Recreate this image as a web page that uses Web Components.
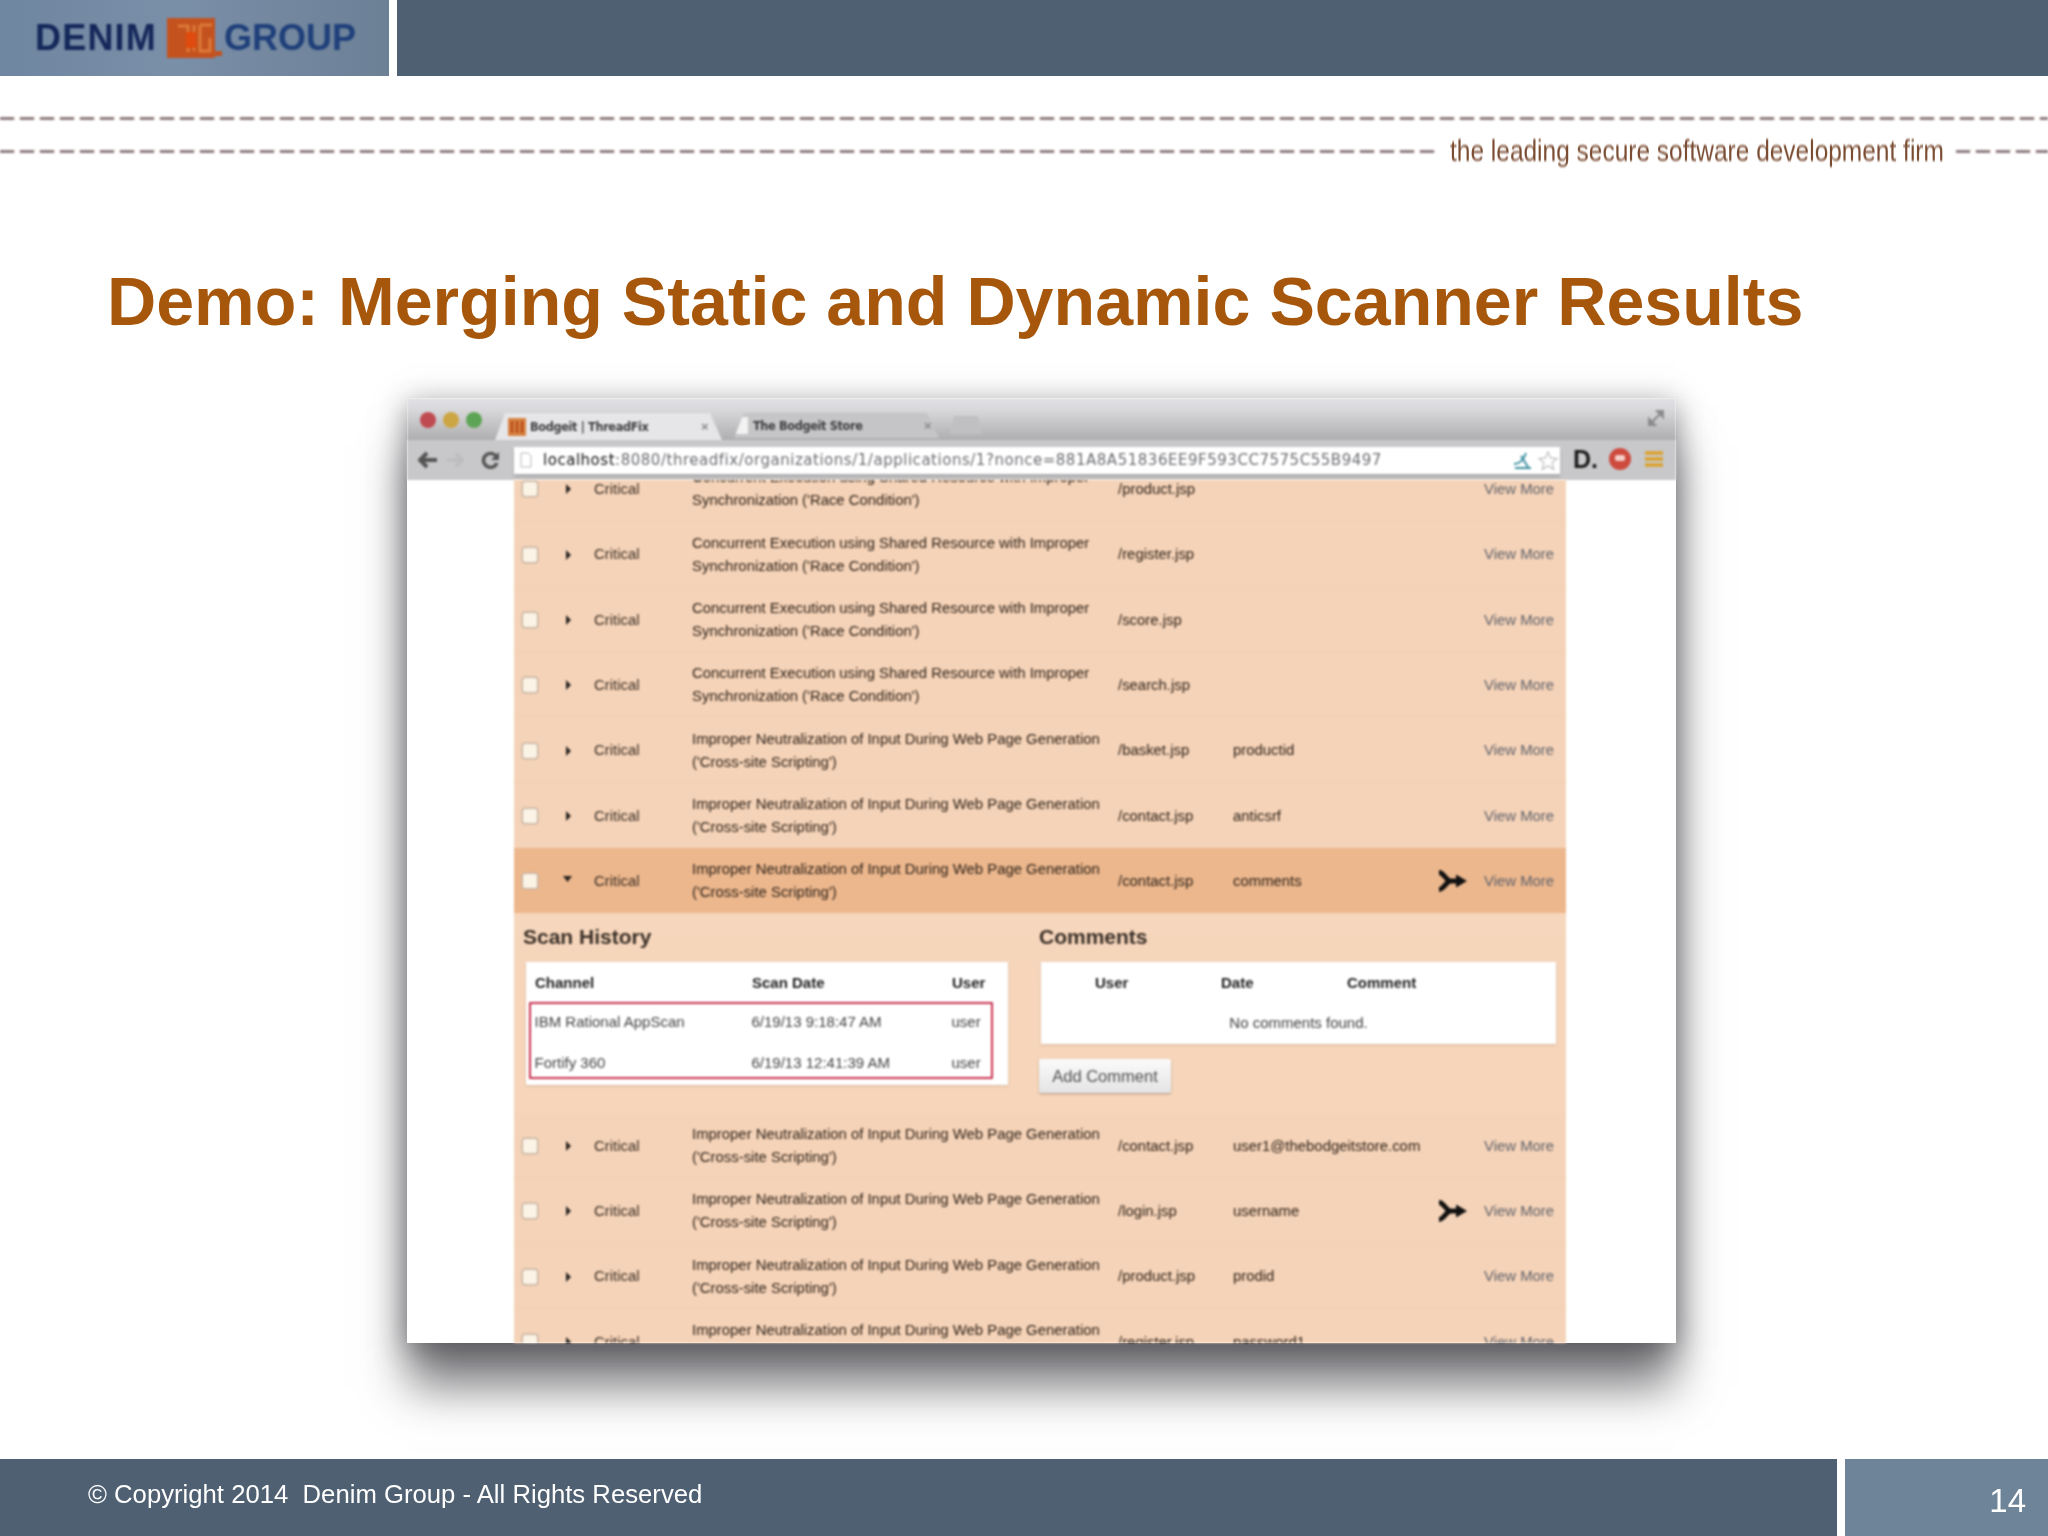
<!DOCTYPE html>
<html lang="en"><head><meta charset="utf-8"><title>Demo: Merging Static and Dynamic Scanner Results</title>
<style>
html,body{margin:0;padding:0;background:#fff}
body{font-family:"Liberation Sans",Arial,sans-serif}
</style></head><body>
<demo-slide>
  <slide-header></slide-header>
  <tagline-rule>the leading secure software development firm</tagline-rule>
  <slide-title>Demo: Merging Static and Dynamic Scanner Results</slide-title>
  <browser-window>
    <finding-row path="/product.jsp">Concurrent Execution using Shared Resource with Improper<br>Synchronization ('Race Condition')</finding-row>
    <finding-row path="/register.jsp">Concurrent Execution using Shared Resource with Improper<br>Synchronization ('Race Condition')</finding-row>
    <finding-row path="/score.jsp">Concurrent Execution using Shared Resource with Improper<br>Synchronization ('Race Condition')</finding-row>
    <finding-row path="/search.jsp">Concurrent Execution using Shared Resource with Improper<br>Synchronization ('Race Condition')</finding-row>
    <finding-row path="/basket.jsp" param="productid">Improper Neutralization of Input During Web Page Generation<br>('Cross-site Scripting')</finding-row>
    <finding-row path="/contact.jsp" param="anticsrf">Improper Neutralization of Input During Web Page Generation<br>('Cross-site Scripting')</finding-row>
    <finding-row path="/contact.jsp" param="comments" merged expanded>Improper Neutralization of Input During Web Page Generation<br>('Cross-site Scripting')</finding-row>
    <finding-detail></finding-detail>
    <finding-row path="/contact.jsp" param="user1@thebodgeitstore.com">Improper Neutralization of Input During Web Page Generation<br>('Cross-site Scripting')</finding-row>
    <finding-row path="/login.jsp" param="username" merged>Improper Neutralization of Input During Web Page Generation<br>('Cross-site Scripting')</finding-row>
    <finding-row path="/product.jsp" param="prodid">Improper Neutralization of Input During Web Page Generation<br>('Cross-site Scripting')</finding-row>
    <finding-row path="/register.jsp" param="password1">Improper Neutralization of Input During Web Page Generation<br>('Cross-site Scripting')</finding-row>
  </browser-window>
  <slide-footer></slide-footer>
</demo-slide>
<script>
const def=(name,html)=>customElements.define(name,class extends HTMLElement{
  constructor(){super();this.attachShadow({mode:'open'}).innerHTML=html}
});

def('demo-slide',`<style>
:host{display:flex;flex-direction:column;width:2048px;height:1536px;overflow:hidden;background:#fff}
</style><slot></slot>`);

def('slide-header',`<style>
:host{display:flex;height:76px;gap:8px;flex:none}
.logo{width:389px;background:linear-gradient(90deg,#6f86a0,#7a8fa8 45%,#6c8196);box-sizing:border-box;padding-left:35px;display:flex;align-items:center;
 font:bold 36px/1 "Liberation Sans",sans-serif}
.d{color:#14275a;letter-spacing:1.2px;filter:blur(.8px)}.g{color:#1f3f7a;filter:blur(.8px)}
svg{width:56px;height:40px;margin:0 2px 0 9px;flex:none;filter:blur(1.2px)}
.bar{flex:1;background:#4f6072}
</style>
<div class="logo"><span class="d">DENIM</span>
<svg viewBox="0 0 56 40"><rect x="1" y="0" width="48" height="40" fill="#c4521f"/><rect x="49" y="33" width="7" height="5" fill="#c4521f"/>
<path d="M12 8h10v26M28 7v26M34 7h12M34 7v26h10V20" fill="none" stroke="#dd7a3a" stroke-width="3"/><rect x="20" y="14" width="10" height="16" fill="#e04a0c"/></svg>
<span class="g">GROUP</span></div><div class="bar"></div>`);

def('tagline-rule',`<style>
:host{display:flex;flex-direction:column;flex:none;height:96px;box-sizing:border-box;padding-top:41px}
.dash{flex:none;height:3px;background:repeating-linear-gradient(90deg,#8d7b7f 0 14px,#f3e4da 14px 15px,#fff 15px 19px,#f3e4da 19px 20px);filter:blur(.8px)}
.row2{flex:none;display:flex;align-items:center;margin-top:16.500px;height:30px}
.a{width:1435px}.b{flex:1;min-width:0}
.t{flex:none;width:490px;margin:-2px 16px 0 15px;height:30px}
span{display:block;transform:scaleX(.844);transform-origin:0 50%;white-space:nowrap;font:29px/30px "Liberation Sans",sans-serif;color:#7a4c32;filter:blur(.8px)}
</style><div class="dash"></div>
<div class="row2"><div class="dash a"></div><div class="t"><span><slot></slot></span></div><div class="dash b"></div></div>`);

def('slide-title',`<style>
:host{display:block;flex:none;height:84px;margin-top:87px;padding-left:107px;font:bold 68.150px/84px "Liberation Sans",sans-serif;color:#a7570b;white-space:nowrap}
</style><slot></slot>`);

def('browser-window',`<style>
:host{display:flex;flex-direction:column;flex:none;box-sizing:border-box;width:1269px;height:945px;margin:55px 0 0 407px;background:#fff;
 box-shadow:0 46px 44px -2px rgba(40,40,45,.6),0 6px 28px rgba(40,40,45,.5)}
.chrome{flex:none;filter:blur(.8px)}
.tabs{height:42px;display:flex;align-items:flex-end;background:linear-gradient(#e2e2e6,#dadadd 25%,#aeaeb0);padding-left:88px;position:relative}
.lights{position:absolute;left:13px;top:14px;display:flex;gap:7px}
.lights i{width:16px;height:16px;border-radius:50%}
.expand{position:absolute;right:11px;top:11px;width:18px;height:18px}
.stub{width:32px;height:18px;margin:0 0 6px 11px;background:#c0c0c2;clip-path:polygon(4px 0,calc(100% - 4px) 0,100% 100%,0 100%)}
.bar{height:40px;background:#c8c8ca;display:flex;align-items:center;position:relative}
.nav{width:107px;display:flex;align-items:center;flex:none;padding-left:11px;gap:8px;box-sizing:border-box}
.url{width:1046px;height:27px;background:#fff;flex:none;display:flex;align-items:center;box-shadow:0 3px 3px rgba(120,120,120,.35);position:relative}
.url .t{font:15px/27px "DejaVu Sans",sans-serif;color:#6c6d71;white-space:nowrap;margin-left:11px;letter-spacing:.525px}
.url b{font-weight:400;color:#111}
.tools{display:flex;align-items:center;position:absolute;left:1166px;top:0;height:40px;gap:11px;margin-top:-1px}
.d{font:bold 25px/1 "Liberation Sans",sans-serif;color:#1c1c1c;width:24px}
.scroll{flex:1;overflow:hidden;min-height:0;filter:blur(.8px)}
.page{width:1052px;margin:-24px 0 0 107px;background:#f5d3b8;font:15px/23px "Liberation Sans",sans-serif;color:#2e2218}
</style>
<div class="chrome"><div class="tabs">
<div class="lights"><i style="background:#c04a52"></i><i style="background:#cda644"></i><i style="background:#5ea456"></i></div>
<browser-tab active style="width:227px">Bodgeit | ThreadFix</browser-tab>
<browser-tab style="width:205px;margin-left:12px">The Bodgeit Store</browser-tab>
<div class="stub"></div>
<svg class="expand" viewBox="0 0 18 18"><path d="M10 2h6v6zM2 16V10l6 6zM13 5L5 13" fill="#8b8b8d" stroke="#8b8b8d" stroke-width="2"/></svg>
</div>
<div class="bar">
<div class="nav">
<svg width="20" height="18" viewBox="0 0 20 18"><path d="M9 2L2 9l7 7M3 9h16" fill="none" stroke="#555" stroke-width="4"/></svg>
<svg width="18" height="18" viewBox="0 0 20 18"><path d="M11 2l7 7-7 7M17 9H1" fill="none" stroke="#bdbdbf" stroke-width="4"/></svg>
<svg width="20" height="20" viewBox="0 0 20 20" style="margin-left:9px"><path d="M16 13a7 7 0 1 1-1-7" fill="none" stroke="#555" stroke-width="3.4"/><path d="M18 2v8h-8z" fill="#555"/></svg>
</div>
<div class="url">
<svg width="12" height="16" viewBox="0 0 12 16" style="margin-left:6px;flex:none"><path d="M1 1h7l3 3v11H1z" fill="#fff" stroke="#b8b8b8"/></svg>
<div class="t"><b>localhost</b>:8080/threadfix/organizations/1/applications/1?nonce=881A8A51836EE9F593CC7575C55B9497</div>
<svg width="22" height="20" viewBox="0 0 22 20" style="position:absolute;left:998px;top:4px"><path d="M2 13c5 0 9-3 12-11M9 5l7 11M3 17h16" fill="none" stroke="#3d8fa0" stroke-width="2"/></svg>
<svg width="22" height="22" viewBox="0 0 22 22" style="position:absolute;left:1023px;top:3px"><path d="M11 2l2.7 6 6.3.6-4.8 4.2 1.5 6.4-5.7-3.4-5.7 3.4 1.5-6.4L2 8.600l6.300-.6z" fill="#fff" stroke="#c6c6c8" stroke-width="1.4"/></svg>
</div>
<div class="tools"><span class="d">D.</span>
<svg width="24" height="24" viewBox="0 0 24 24"><circle cx="12" cy="12" r="11" fill="#cf4a3e"/><rect x="7" y="8" width="10" height="6" rx="2" fill="#f4cfc8"/></svg>
<svg width="22" height="18" viewBox="0 0 22 18"><path d="M2 3h18M2 9h18M2 15h18" stroke="#dca12a" stroke-width="3.400"/></svg>
</div></div></div>
<div class="scroll"><div class="page"><slot></slot></div></div>`);

customElements.define('browser-tab',class extends HTMLElement{
  constructor(){super();const a=this.hasAttribute('active');
   this.attachShadow({mode:'open'}).innerHTML=`<style>
   :host{display:flex;align-items:center;box-sizing:border-box;height:${a?27:25}px;flex:none;background:${a?'#e6e6e8':'#c5c5c7'};
    clip-path:polygon(10px 0,calc(100% - 12px) 0,100% 100%,0 100%);padding:0 0 0 ${a?13:2}px;font:bold 13px/1 "DejaVu Sans",sans-serif;color:#444;margin-bottom:${a?0:2}px}
   .ic{flex:none;margin-right:${a?4:5}px}
   .tx{flex:1;white-space:nowrap;letter-spacing:-.4px;transform:scaleX(.87);transform-origin:0 50%;color:#3c3c3e}
   .x{flex:none;width:${a?21:15}px;color:#888;font:bold 13px/1 "Liberation Sans",sans-serif}
   </style>
   ${a?'<svg class="ic" width="18" height="18" viewBox="0 0 18 18"><rect width="18" height="18" fill="#d88444"/><path d="M4 3v12M9 3v12M14 3v12" stroke="#b84d18" stroke-width="2.500"/></svg>':'<svg class="ic" width="12" height="17" viewBox="0 0 12 17"><rect width="12" height="17" fill="#f2f2f2"/></svg>'}
   <span class="tx"><slot></slot></span><span class="x">×</span>`;}
});

customElements.define('finding-row',class extends HTMLElement{
  constructor(){super();const r=this.attachShadow({mode:'open'});
   const p=this.getAttribute('path')||'',q=this.getAttribute('param')||'',m=this.hasAttribute('merged'),e=this.hasAttribute('expanded');
   r.innerHTML=`<style>
   :host{display:grid;grid-template-columns:39px 32px 98px 426px 115px 204px 47px 1fr;align-items:center;height:65.33px;box-sizing:border-box;padding:1.500px 0 0 9px;
     background:${e?'#ecb78d':'#f5d3b8'};box-shadow:${e?'none':'inset 0 -1px 0 #f2cfb3'};font:14.900px/23px "Liberation Sans",sans-serif;color:#2e2218;white-space:nowrap}
   .c{width:14px;height:14px;border-radius:2px;background:#fbf3e6;box-shadow:0 0 0 1.500px #c8b5a3}
   svg{display:block}
   .s{color:#3a2e24}
   .v{color:#60626a}
   </style>
   <span class="c"></span>
   <span>${e?'<svg width="10" height="8" viewBox="0 0 10 8" style="margin-left:1px;margin-top:-5px"><path d="M0 1h9L4.500 7z" fill="#2a2420"/></svg>':'<svg width="7" height="10" viewBox="0 0 7 10" style="margin-left:3px"><path d="M1 0v10l5-5z" fill="#2a2420"/></svg>'}</span>
   <span class="s">Critical</span><span><slot></slot></span><span>${p}</span><span>${q}</span>
   <span>${m?'<svg width="31" height="22" viewBox="0 0 31 22"><path d="M2 2.500c5 0 7 8.500 12 8.500-5 0-7 8.500-12 8.500M13 11h8" fill="none" stroke="#111" stroke-width="5"/><path d="M19 4.500L30 11 19 17.500z" fill="#111"/></svg>':''}</span>
   <span class="v">View More</span>`;}
});

def('finding-detail',`<style>
:host{display:grid;grid-template-columns:516px 1fr;height:199.4px;box-sizing:border-box;padding:11px 10px 0 9px;background:linear-gradient(#f6d6bc,#f6d5ba);color:#2e2218}
h3{margin:0 0 12px;font:bold 21px/26px "Liberation Sans",sans-serif;color:#3a2f27}
.card{background:#fff;box-shadow:0 1px 2px rgba(150,120,100,.35);font:15px/28px "Liberation Sans",sans-serif;color:#434346;white-space:nowrap}
.sh{margin-left:3px;width:482px;height:123px}
.head{font-weight:700;color:#1e1e20;height:40px;line-height:42px}
.g1{display:grid;grid-template-columns:217px 200px 1fr}
.sh .head{padding-left:9px}
.box{width:464px;height:77px;margin-left:2.500px;box-sizing:border-box;border:2.500px solid #c8304d;padding:4px 0 0 4px;border-radius:1px;display:grid;row-gap:13px;grid-auto-rows:28px}
.co{margin-left:2px;width:515px;height:82px}
.g2{display:grid;grid-template-columns:126px 126px 1fr;padding-left:54px}
.none{text-align:center;line-height:28px;margin-top:7px;color:#3e3e40}
button{display:block;width:132px;height:34px;margin-top:15px;padding:0;border:0;border-radius:2px;background:linear-gradient(#fbfbfb,#e4e4e4);box-shadow:0 1px 2px rgba(120,100,90,.6);font:16.500px/32px "Liberation Sans",sans-serif;color:#505052}
</style>
<div><h3>Scan History</h3>
<div class="card sh"><div class="head g1"><span>Channel</span><span>Scan Date</span><span>User</span></div>
<div class="box"><div class="g1"><span>IBM Rational AppScan</span><span>6/19/13 9:18:47 AM</span><span>user</span></div>
<div class="g1"><span>Fortify 360</span><span>6/19/13 12:41:39 AM</span><span>user</span></div></div></div></div>
<div><h3>Comments</h3>
<div class="card co"><div class="head g2"><span>User</span><span>Date</span><span>Comment</span></div><div class="none">No comments found.</div></div>
<button>Add Comment</button></div>`);

def('slide-footer',`<style>
:host{display:flex;height:77px;flex:none;gap:8px;margin-top:auto;font-family:"Liberation Sans",sans-serif;color:#fff}
.l{width:1837px;background:#4f6072;box-sizing:border-box;padding:17px 0 0 88px;font-size:25.700px;line-height:36px;white-space:pre;filter:blur(.25px)}
.r{flex:1;background:#6e8499;box-sizing:border-box;text-align:right;padding:22px 22px 0 0;font-size:33px;line-height:40px;filter:blur(.25px)}
</style><div class="l">© Copyright 2014  Denim Group - All Rights Reserved</div><div class="r">14</div>`);
</script>
</body></html>
